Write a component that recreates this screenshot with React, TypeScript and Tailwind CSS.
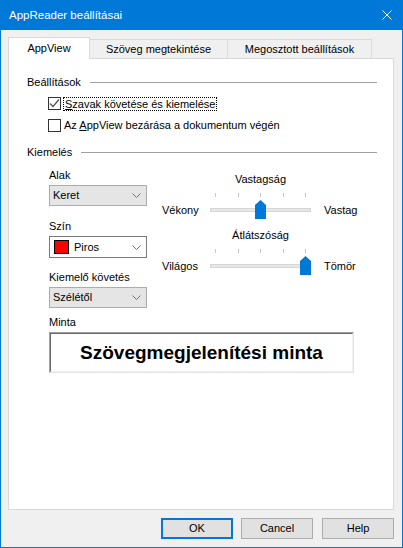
import type { ReactNode } from 'react'

const FONT = "font-['Liberation_Sans',Arial,sans-serif]"

export default function App() {
  return (
    <div className={`flex h-[548px] w-[403px] flex-col bg-[#0078d7] text-[11px] leading-[13px] text-black ${FONT}`}>
      <TitleBar />
      <div className="mx-px mb-px flex flex-1 flex-col bg-[#f0f0f0] pl-[7px]">
        <TabStrip />
        <div className="h-[452px] w-[386px] border border-[#d9d9d9] bg-white">
          <GroupHeader label="Beállítások" className="mt-[17px]" />
          <div className="ml-[39px] mt-[8px] flex flex-col gap-[9px]">
            <CheckRow checked focused>
              <u>S</u>zavak követése és kiemelése
            </CheckRow>
            <CheckRow>
              Az <u>A</u>ppView bezárása a dokumentum végén
            </CheckRow>
          </div>
          <GroupHeader label="Kiemelés" className="mt-[14px]" />
          <div className="flex">
            <div className="ml-[40px] flex w-[98px] flex-col pt-[10px]">
              <div>Alak</div>
              <Combo className="mt-[3px]">Keret</Combo>
              <div className="mt-[14px]">Szín</div>
              <ColorCombo />
              <div className="mt-[13px]">Kiemelő követés</div>
              <Combo className="mt-[3px]">Szélétől</Combo>
            </div>
            <div className="ml-[15px] flex flex-col pt-[14px]">
              <SliderBlock title="Vastagság" left="Vékony" right="Vastag" value={2} />
              <SliderBlock title="Átlátszóság" left="Világos" right="Tömör" value={4} className="mt-[10px]" />
            </div>
          </div>
          <div className="ml-[40px] mt-[8px]">Minta</div>
          <div className="ml-[40px] mt-[3px] h-[41px] w-[305px] border border-t-[#a0a0a0] border-l-[#a0a0a0] border-r-[#e3e3e3] border-b-[#e3e3e3]">
            <div className="flex h-full w-full items-center justify-center border border-t-[#696969] border-l-[#696969] border-r-[#f0f0f0] border-b-[#f0f0f0] text-[19px] font-bold leading-[22px]">
              Szövegmegjelenítési minta
            </div>
          </div>
        </div>
        <div className="mt-[8px] flex h-[21px] pl-[153px]">
          <DialogButton isDefault>OK</DialogButton>
          <DialogButton className="ml-[8px]">Cancel</DialogButton>
          <DialogButton className="ml-[9px]">Help</DialogButton>
        </div>
      </div>
    </div>
  )
}

function TitleBar() {
  return (
    <div className="flex h-[30px] shrink-0 items-center pl-[9px] pr-[11px] text-[11.5px] text-white">
      <span>AppReader beállításai</span>
      <svg className="ml-auto" width="10" height="10" viewBox="0 0 10 10">
        <path d="M0.5 0.5 L9.5 9.5 M9.5 0.5 L0.5 9.5" stroke="#ffffff" strokeWidth="1" fill="none" />
      </svg>
    </div>
  )
}

function TabStrip() {
  return (
    <div className="mt-[7px] flex h-[21px] items-end">
      <div className="relative z-10 -mb-px flex h-[22px] w-[82px] items-center justify-center border border-b-0 border-[#d9d9d9] bg-white pb-px">
        AppView
      </div>
      <div className="flex h-[19px] w-[138px] items-center justify-center border border-b-0 border-l-0 border-[#d9d9d9] bg-[#f0f0f0]">
        Szöveg megtekintése
      </div>
      <div className="flex h-[19px] w-[144px] items-center justify-center border border-b-0 border-l-0 border-[#d9d9d9] bg-[#f0f0f0]">
        Megosztott beállítások
      </div>
    </div>
  )
}

function GroupHeader({ label, className }: { label: string; className?: string }) {
  return (
    <div className={`flex h-[13px] items-center pl-[18px] pr-[16px] ${className ?? ''}`}>
      <span>{label}</span>
      <div className="ml-[9px] h-px flex-1 bg-[#a0a0a0]" />
    </div>
  )
}

function CheckRow({ checked, focused, children }: { checked?: boolean; focused?: boolean; children: ReactNode }) {
  return (
    <div className="flex h-[13px] items-center">
      <div className="flex h-[13px] w-[13px] items-center justify-center border border-[#333333] bg-white">
        {checked && (
          <svg width="11" height="11" viewBox="0 0 11 11">
            <path d="M1 5.5 L4 8.5 L10 1.5" stroke="#555555" strokeWidth="1.3" fill="none" />
          </svg>
        )}
      </div>
      <span className={focused ? 'ml-[2px] border border-dotted border-black px-px leading-[12px]' : 'ml-[3px]'}>{children}</span>
    </div>
  )
}

function Chevron() {
  return (
    <svg width="9" height="5" viewBox="0 0 9 5">
      <path d="M0.5 0.5 L4.5 4.5 L8.5 0.5" stroke="#707070" strokeWidth="1" fill="none" />
    </svg>
  )
}

function Combo({ children, className }: { children: ReactNode; className?: string }) {
  return (
    <div className={`flex h-[21px] items-center border border-[#acacac] bg-[#e5e5e5] pl-[3px] pr-[5px] ${className ?? ''}`}>
      <span>{children}</span>
      <span className="ml-auto flex">
        <Chevron />
      </span>
    </div>
  )
}

function ColorCombo() {
  return (
    <div className="mt-[3px] flex h-[22px] items-center border border-[#7a7a7a] bg-white pl-[4px] pr-[5px]">
      <div className="h-[14px] w-[15px] border border-black bg-[#ff0000]" />
      <span className="ml-[5px]">Piros</span>
      <span className="ml-auto flex">
        <Chevron />
      </span>
    </div>
  )
}

function SliderBlock({ title, left, right, value, className }: { title: string; left: string; right: string; value: number; className?: string }) {
  const ticks = [0, 1, 2, 3, 4]
  return (
    <div className={`flex ${className ?? ''}`}>
      <div className="w-[48px] pt-[31px]">{left}</div>
      <div className="flex w-[101px] flex-col">
        <div className="text-center">{title}</div>
        <div className="mt-[7px] flex h-[4px] justify-between px-[5px]">
          {ticks.map((t) => (
            <div key={t} className="h-[4px] w-px bg-[#c4c4c4]" />
          ))}
        </div>
        <div className="relative mt-[3px] h-[19px]">
          <div className="absolute left-0 right-0 top-[8px] h-[4px] border border-[#d6d6d6] bg-[#e7e7e7]" />
          <svg className="absolute top-0" style={{ left: value * 22.5 }} width="11" height="19" viewBox="0 0 11 19">
            <path d="M0 5 L5.5 0 L11 5 L11 19 L0 19 Z" fill="#0078d7" />
          </svg>
        </div>
      </div>
      <div className="ml-[13px] pt-[31px]">{right}</div>
    </div>
  )
}

function DialogButton({ children, isDefault, className }: { children: ReactNode; isDefault?: boolean; className?: string }) {
  return (
    <div
      className={`flex h-[21px] w-[72px] items-center justify-center bg-[#e1e1e1] ${
        isDefault ? 'border-2 border-[#0078d7]' : 'border border-[#adadad]'
      } ${className ?? ''}`}
    >
      {children}
    </div>
  )
}
